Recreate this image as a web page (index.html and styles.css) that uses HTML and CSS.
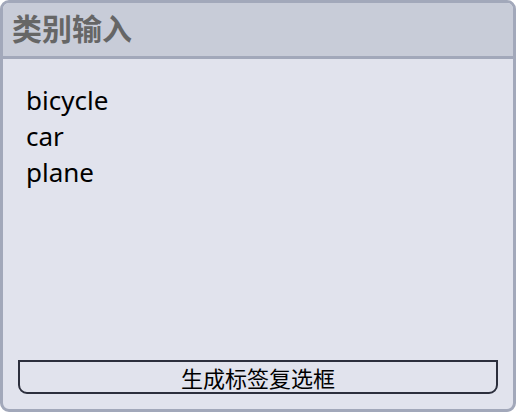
FILE: index.html
```html
<!DOCTYPE html>
<html lang="zh">
<head>
<meta charset="utf-8">
<link rel="stylesheet" href="styles.css">
</head>
<body>
<div class="panel">
  <div class="header">类别输入</div>
  <div class="body">
    <div class="list">
      <div class="item">bicycle</div>
      <div class="item">car</div>
      <div class="item">plane</div>
    </div>
    <button class="btn">生成标签复选框</button>
  </div>
</div>
</body>
</html>
```

FILE: styles.css
```css
html, body {
  margin: 0;
  padding: 0;
  background: #ffffff;
}
.panel {
  box-sizing: border-box;
  width: 516px;
  height: 412px;
  border: 3px solid #a2a8ba;
  border-radius: 9px;
  background: #e1e3ed;
  display: flex;
  flex-direction: column;
  overflow: hidden;
}
.header {
  box-sizing: border-box;
  height: 56px;
  background: #c8ccd8;
  border-bottom: 3px solid #a2a8ba;
  padding: 4px 0 0 9px;
  font-family: "Noto Sans CJK SC", sans-serif;
  font-weight: 700;
  font-size: 30px;
  line-height: 40px;
  color: #666666;
}
.body {
  flex: 1;
  display: flex;
  flex-direction: column;
  padding: 23px 15px 15px 15px;
}
.list {
  flex: 1;
  padding-left: 8px;
  font-family: "Noto Sans", "Open Sans", sans-serif;
  font-size: 26px;
  line-height: 36px;
  color: #000000;
}
.btn {
  box-sizing: border-box;
  height: 34px;
  width: 100%;
  border: 2px solid #2c2f3d;
  border-radius: 0 0 9px 9px;
  background: transparent;
  font-family: "Noto Sans CJK SC", sans-serif;
  font-size: 22px;
  line-height: 28px;
  padding: 0;
  color: #000000;
}
```
